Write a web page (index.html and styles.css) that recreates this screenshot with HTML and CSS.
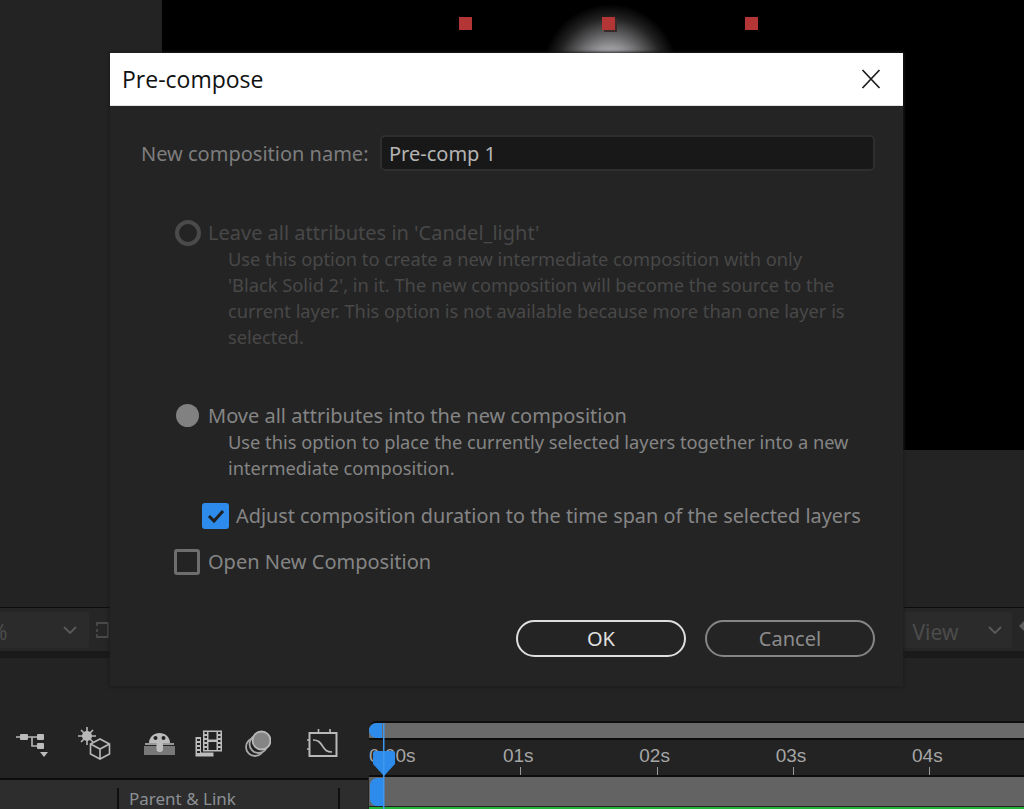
FILE: index.html
```html
<!DOCTYPE html>
<html lang="en">
<head>
<meta charset="utf-8">
<title>Pre-compose</title>
<link rel="stylesheet" href="styles.css">
</head>
<body>
<div class="app">
  <div class="viewer-row">
    <div class="side-panel"></div>
    <div class="viewer">
      <span class="handle"></span>
      <span class="handle handle-shadow"></span>
      <span class="handle"></span>
    </div>
  </div>
  <div class="viewer-foot"></div>
  <div class="toolbar">
    <div class="tool-left">
      <div class="drop drop-left"><span>%</span><svg class="chev" viewBox="0 0 14 8"><path d="M1 1l6 6 6-6"/></svg></div>
      <svg class="region" viewBox="0 0 14 18"><path d="M4 2h8v14H4M4 2H1v3M4 16H1v-3M1 8v3"/></svg>
    </div>
    <div class="tool-right">
      <div class="drop drop-right"><span>1 View</span><svg class="chev" viewBox="0 0 14 8"><path d="M1 1l6 6 6-6"/></svg></div>
      <span class="tool-arrow"></span>
    </div>
  </div>
  <div class="band"></div>
  <div class="timeline">
    <div class="tl-left">
      <div class="tl-tools">
        <div class="tool-cell c1">
          <svg width="32" height="26" viewBox="16 733 32 26">
            <path class="ln" d="M16 737h21M32 737v9h6"/>
            <rect class="fl" x="20" y="734" width="8" height="6" rx="1"/>
            <rect class="fl" x="37" y="734" width="7" height="6" rx="1"/>
            <rect class="fl" x="37" y="743" width="7" height="6" rx="1"/>
            <path class="fl" d="M40 752h8l-4 5z"/>
          </svg>
        </div>
        <div class="tool-cell c2">
          <svg width="33" height="33" viewBox="78 727 33 33">
            <circle class="fl" cx="87" cy="736" r="5"/>
            <path class="ln" d="M87 727v18M78 736h18M81 730l12 12M93 730l-12 12"/>
            <path class="ln" d="M100 739l9.500 5v10l-9.500 5-9.500-5v-10zM90.500 744l9.500 5 9.500-5M100 749v10"/>
          </svg>
        </div>
        <div class="tool-cell c3">
          <svg width="31" height="23" viewBox="144 733 31 23">
            <rect class="dim" x="144" y="746" width="31" height="9"/>
            <path class="fl" d="M149 743c0-6 5-10 10.500-10s10.500 4 10.500 10z"/>
            <path class="ln" d="M145 744h29"/>
            <rect class="fl" x="156.500" y="741" width="6.500" height="11" rx="3"/>
            <circle class="dk" cx="155.500" cy="738" r="2"/>
            <circle class="dk" cx="163.500" cy="738" r="2"/>
          </svg>
        </div>
        <div class="tool-cell c4">
          <svg width="27" height="27" viewBox="195 730 27 27">
            <rect class="fl" x="195.500" y="737" width="18" height="19.500"/>
            <rect class="bgf" x="201" y="729.500" width="22" height="23"/>
            <rect class="fl" x="203" y="730.500" width="19" height="21"/>
            <path class="dk" d="M197 739h3v2h-3zM197 743h3v2h-3zM197 747h3v2h-3zM197 751h3v2h-3zM204.500 732h2.500v2h-2.500zM204.500 736h2.500v2h-2.500zM204.500 740h2.500v2h-2.500zM204.500 744h2.500v2h-2.500zM204.500 748h2.500v2h-2.500zM218 732h2.500v2H218zM218 736h2.500v2H218zM218 740h2.500v2H218zM218 744h2.500v2H218zM218 748h2.500v2H218z"/>
            <rect class="dk" x="208.500" y="732" width="8" height="7.500"/>
            <rect class="dk" x="208.500" y="742" width="8" height="8"/>
          </svg>
        </div>
        <div class="tool-cell c5">
          <svg width="26" height="27" viewBox="245 730 26 27">
            <circle class="ring" cx="255" cy="747" r="9"/>
            <circle class="ring" cx="258.500" cy="744" r="9"/>
            <circle class="disc" cx="261.500" cy="740.500" r="9"/>
          </svg>
        </div>
        <div class="tool-cell c6">
          <svg width="31" height="28" viewBox="307 729 31 28">
            <rect class="ln2" x="309.500" y="733" width="27" height="23"/>
            <path class="ln" d="M318.500 729v4M330 729v4M307 740h3M307 749h3"/>
            <path class="ln" d="M313 740c5 0 7 2 9.500 6s4 6 9.500 6"/>
          </svg>
        </div>
      </div>
      <div class="tl-header">
        <span class="sep sep-a"></span>
        <span class="col-name">Parent &amp; Link</span>
        <span class="sep"></span>
      </div>
    </div>
    <div class="tl-right">
      <div class="nav-bar"></div>
      <div class="ruler">
        <div class="tick-cell first"><span>0:00s</span></div>
        <div class="tick-cell"><span>01s</span></div>
        <div class="tick-cell"><span>02s</span></div>
        <div class="tick-cell"><span>03s</span></div>
        <div class="tick-cell"><span>04s</span></div>
      </div>
      <div class="work-bar"></div>
      <div class="green-line"></div>
      <span class="cap cap-nav"></span>
      <span class="cap cap-work"></span>
      <svg class="playhead" width="24" height="90" viewBox="0 0 24 90">
        <path class="ph-body" d="M3 28h18q2 0 2 2v11L12 53 1 41V30q0-2 2-2z"/>
        <rect class="ph-line" x="11" y="0" width="1.500" height="90"/>
      </svg>
    </div>
  </div>
</div>

<div class="dialog">
  <div class="title-bar">
    <span class="title">Pre-compose</span>
    <svg class="close" width="20" height="20" viewBox="0 0 20 20"><path d="M1.500 1l17 18M18.500 1l-17 18"/></svg>
  </div>
  <div class="dialog-body">
    <div class="name-row">
      <span class="name-label">New composition name:</span>
      <div class="name-input">Pre-comp 1</div>
    </div>
    <div class="opt opt-first disabled">
      <span class="radio radio-off"></span>
      <span>Leave all attributes in 'Candel_light'</span>
    </div>
    <p class="desc disabled">Use this option to create a new intermediate composition with only<br>'Black Solid 2', in it. The new composition will become the source to the<br>current layer. This option is not available because more than one layer is<br>selected.</p>
    <div class="opt opt-second">
      <span class="radio radio-on"></span>
      <span>Move all attributes into the new composition</span>
    </div>
    <p class="desc">Use this option to place the currently selected layers together into a new<br>intermediate composition.</p>
    <div class="check-row check-adjust">
      <span class="check checked"><svg width="20" height="16" viewBox="0 0 20 16"><path d="M3 8l5 5 9-10"/></svg></span>
      <span class="adjust-label">Adjust composition duration to the time span of the selected layers</span>
    </div>
    <div class="check-row check-open">
      <span class="check"></span>
      <span>Open New Composition</span>
    </div>
    <div class="buttons">
      <button class="btn btn-ok">OK</button>
      <button class="btn btn-cancel">Cancel</button>
    </div>
  </div>
</div>
</body>
</html>
```
FILE: styles.css
```css
* { box-sizing: border-box; }
html, body { margin: 0; padding: 0; background: #232323; }
body { width: 1024px; height: 809px; overflow: hidden; position: relative; font-family: "Noto Sans", "Open Sans", sans-serif; }

.app { width: 1024px; height: 809px; display: flex; flex-direction: column; background: #232323; }
.viewer-row { flex: none; height: 450px; display: flex; }
.side-panel { width: 162px; background: #232323; }
.viewer {
  flex: 1; display: flex; gap: 130px; align-items: flex-start;
  padding: 17px 0 0 297px;
  background: radial-gradient(circle at 448px 72px, #c8c8cc 0, #acacb0 20px, #626264 38px, #222 54px, #000 68px);
}
.handle { width: 13px; height: 13px; background: #b33535; }
.handle-shadow { box-shadow: 2px 2px 0 #3a2a2a; }
.viewer-foot { flex: none; height: 158px; border-bottom: 1px solid #0c0c0c; }

.toolbar { flex: none; height: 43px; display: flex; justify-content: space-between; padding-top: 4px; background: #262626; }
.tool-left, .tool-right { display: flex; align-items: flex-start; }
.drop { height: 36px; background: #2b2b2b; border-radius: 3px; display: flex; align-items: center; color: #4c4c4c; font-size: 21px; }
.drop-left { width: 90px; margin-left: -1px; justify-content: space-between; padding-right: 12px; }
.drop-left span { margin-left: -9px; position: relative; top: 2px; }
.drop-right { width: 122px; justify-content: space-between; padding-left: 5px; padding-right: 10px; }
.drop-right span { position: relative; top: 2px; }
.chev { width: 14px; height: 8px; fill: none; stroke: #5a5a5a; stroke-width: 1.800; }
.region { width: 14px; height: 18px; margin: 9px 0 0 7px; fill: none; stroke: #4a4a4a; stroke-width: 1.800; }
.tool-arrow { width: 0; height: 0; margin: 9px 0 0 7px; border: 5px solid transparent; border-right-color: #5c5c5c; border-left-width: 0; }
.band { flex: none; height: 7px; background: #1a1a1a; }

.timeline { flex: none; height: 151px; display: flex; overflow: hidden; }
.tl-left { width: 368px; height: 151px; display: flex; flex-direction: column; }
.tl-tools { flex: none; height: 120px; display: flex; padding: 69px 0 0 16px; align-items: flex-start; }
.tool-cell { display: flex; }
.tool-cell svg { display: block; }
.c1 { width: 62px; margin-top: 6px; }
.c2 { width: 66px; margin-top: 0; }
.c3 { width: 51px; margin-top: 6px; }
.c4 { width: 50px; margin-top: 3px; }
.c5 { width: 62px; margin-top: 3px; }
.c6 { width: 31px; margin-top: 2px; }
.ln { fill: none; stroke: #b8b8b8; stroke-width: 1.600; }
.ln2 { fill: none; stroke: #b8b8b8; stroke-width: 2; }
.fl { fill: #bcbcbc; }
.dim { fill: #787878; }
.dk { fill: #232323; }
.bgf { fill: #232323; }
.ring { fill: #232323; stroke: #a8a8a8; stroke-width: 1.800; }
.disc { fill: #858585; stroke: #b8b8b8; stroke-width: 1.800; }

.tl-header { flex: none; height: 31px; background: #2d2d2d; border-top: 2px solid #0d0d0d; display: flex; padding: 8px 0 0 117px; overflow: hidden; }
.sep { width: 2px; height: 24px; background: #0f0f0f; }
.col-name { width: 219px; padding-left: 10px; color: #8b9095; font-size: 17px; line-height: 22px; white-space: nowrap; }

.tl-right { flex: 1; position: relative; display: flex; flex-direction: column; padding-top: 63px; background: #232323; overflow: hidden; }
.nav-bar { flex: none; height: 19px; margin-left: 1px; background: #6a6a6a; border-top: 2px solid #0d0d0d; border-bottom: 2px solid #0d0d0d; border-top-left-radius: 8px; }
.ruler { flex: none; height: 37px; display: flex; margin-left: 1px; background: #232323; border-bottom: 2px solid #0d0d0d; }
.tick-cell { flex: 0 0 136.400px; position: relative; text-align: center; color: #a6a6a6; font-family: "Liberation Sans", sans-serif; font-size: 19px; line-height: 32px; padding: 0 4px 0 0; }
.tick-cell.first { flex: 0 0 83px; text-align: left; padding: 0; }
.tick-cell::after { content: ""; position: absolute; bottom: 0; left: 50%; width: 1px; height: 8px; background: #9a9a9a; }
.tick-cell.first::after { display: none; }
.work-bar { flex: none; height: 29px; background: #636363; margin: 0 0 1px 1px; }
.green-line { flex: none; height: 2px; background: #22b53a; margin-left: 1px; }
.cap { position: absolute; background: #2d8ceb; }
.cap-nav { left: 1px; top: 65px; width: 13px; height: 15px; border-radius: 9px 0 0 9px; }
.cap-work { left: 2px; top: 120px; width: 13px; height: 28px; border-radius: 7px 0 0 7px; }
.playhead { position: absolute; left: 4px; top: 65px; }
.ph-body { fill: #2d8ceb; }
.ph-line { fill: #3f97ee; }

.dialog { position: absolute; left: 110px; top: 53px; width: 793px; height: 633px; background: #242424; box-shadow: 0 0 3px 1px #1c1c1c; }
.title-bar { height: 53px; background: #fff; border-bottom: 1px solid #e2e2e2; display: flex; align-items: center; justify-content: space-between; padding: 0 22px 0 12px; }
.title { font-size: 23px; color: #111; font-family: "Open Sans", "Noto Sans", sans-serif; }
.close { fill: none; stroke: #1c1c1c; stroke-width: 1.700; }

.dialog-body { display: flex; flex-direction: column; color: #858585; font-size: 20px; line-height: 26px; }
.name-row { display: flex; align-items: center; margin: 29px 28px 0 31px; }
.name-label { width: 239px; white-space: nowrap; color: #7d7d7d; position: relative; top: 1px; }
.name-input { flex: 1; height: 36px; background: #181818; border: 2px solid #2e2e2e; border-radius: 5px; padding-left: 7px; color: #b4b4b4; line-height: 33px; }
.opt { display: flex; align-items: center; height: 27px; gap: 7px; padding-left: 65px; white-space: nowrap; }
.opt-first { margin-top: 48px; }
.opt-second { margin-top: 52px; }
.disabled { color: #484848; }
.radio { width: 26px; height: 26px; border-radius: 50%; flex: none; }
.radio-off { border: 4px solid #4a4a4a; }
.radio-on { background: #818181; width: 23px; height: 23px; margin: 0 2px 0 1px; }
.desc { margin: 0 0 0 118px; white-space: nowrap; font-size: 18.250px; }
.check-row { display: flex; align-items: center; height: 28px; white-space: nowrap; }
.check-adjust { margin-top: 21px; padding-left: 92px; gap: 7px; }
.adjust-label { font-size: 19.850px; }
.check-open { margin-top: 18px; padding-left: 64px; gap: 8px; }
.check { width: 26px; height: 26px; border-radius: 3px; border: 3px solid #6e6e6e; flex: none; display: flex; align-items: center; justify-content: center; }
.check.checked { background: #2d8ceb; border: 0; width: 27px; }
.check svg { fill: none; stroke: #1f1f1f; stroke-width: 3; }
.buttons { display: flex; justify-content: flex-end; gap: 19px; margin: 44px 28px 0 0; }
.btn { width: 170px; height: 37px; border-radius: 19px; background: transparent; font: inherit; font-size: 20px; line-height: 30px; padding: 0; }
.btn-ok { border: 2.500px solid #dedede; color: #e0e0e0; }
.btn-cancel { border: 2.500px solid #858585; color: #8c8c8c; }
```
